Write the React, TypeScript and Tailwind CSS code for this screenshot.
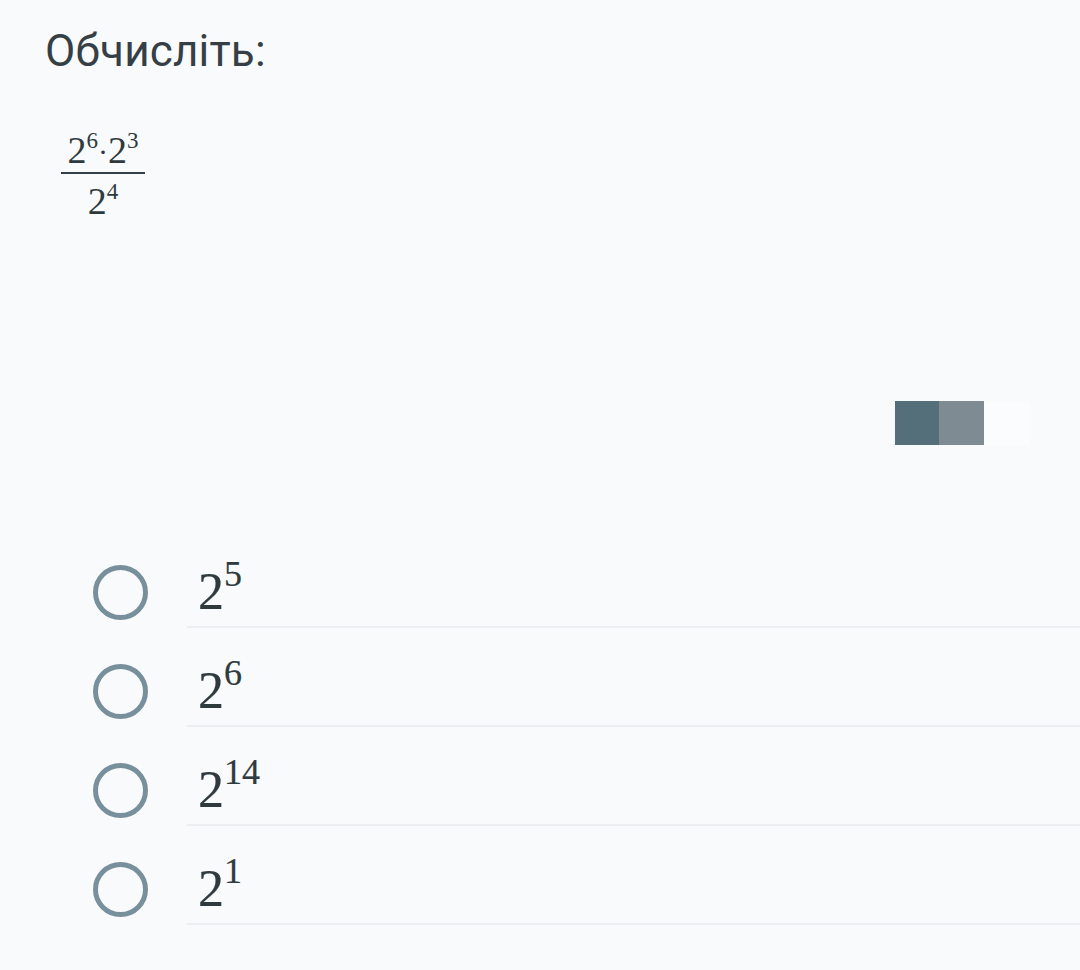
import React from "react";

const serif = { fontFamily: '"Liberation Serif", "Times New Roman", serif' };

function Pow({ base, exp }: { base: string; exp: string }) {
  return (
    <span className="text-[52px] leading-none [-webkit-text-stroke:0.2px_#2f3a3f]" style={serif}>
      {base}
      <span className="relative -top-[23px] text-[36px]">{exp}</span>
    </span>
  );
}

const options = ["5", "6", "14", "1"];

export default function App() {
  return (
    <div className="min-h-[970px] w-[1080px] bg-[#f9fafb] text-[#353f45]" style={{ fontFamily: 'Roboto, "Noto Sans", sans-serif' }}>
      <h1 className="pl-[45px] pt-[29px] text-[44px] font-normal leading-none tracking-[0.2px]">Обчисліть:</h1>

      <div className="ml-[61px] mt-[58px] inline-flex w-[84px] flex-col items-center text-[#2f3a3f]" style={serif}>
        <div className="h-[37px] text-[38px] leading-none whitespace-nowrap">
          2<span className="relative -top-[15px] text-[23px]">6</span>
          <span className="relative -top-[1px] text-[30px]">·</span>
          2<span className="relative -top-[15px] text-[23px]">3</span>
        </div>
        <div className="mt-[4px] h-[2px] w-[84px] bg-[#353f45]" />
        <div className="mt-[8px] h-[37px] text-[38px] leading-none whitespace-nowrap">
          2<span className="relative -top-[15px] text-[23px]">4</span>
        </div>
      </div>

      <div className="mt-[182px] flex justify-end pr-[50px]">
        <div className="flex h-[44px]">
          <div className="w-[44px] bg-[#546e7a]" />
          <div className="w-[45px] bg-[#7e8b92]" />
          <div className="w-[46px] bg-[#fbfcfd]" />
        </div>
      </div>

      <div className="mt-[84px] flex flex-col">
        {options.map((e) => (
          <div key={e} className="flex h-[99px]">
            <div className="ml-[93px] pt-[36px]">
              <div className="h-[55px] w-[55px] rounded-full border-[5px] border-[#78909c]" />
            </div>
            <div className="ml-[39px] flex flex-1 items-end border-b-2 border-[#eceff1] pb-[8px] pl-[11px] text-[#2f3a3f]">
              <Pow base="2" exp={e} />
            </div>
          </div>
        ))}
      </div>
    </div>
  );
}
